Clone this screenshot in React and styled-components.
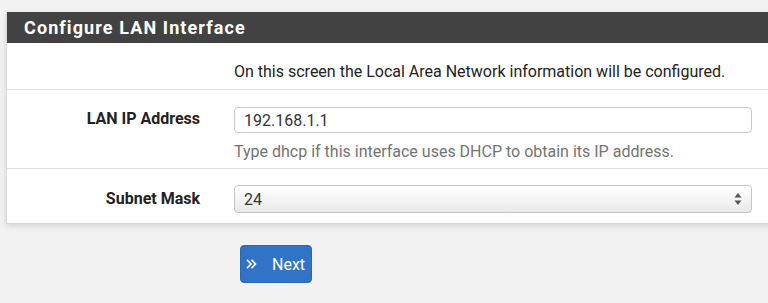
import React from 'react';
import styled, { createGlobalStyle } from 'styled-components';

const GlobalStyle = createGlobalStyle`
  html, body {
    margin: 0;
    padding: 0;
    background: #f2f2f2;
    font-family: Roboto, "Liberation Sans", Arial, sans-serif;
    overflow: hidden;
  }
`;

const Page = styled.div`
  padding: 12px 0 0 6px;
  width: 800px;
`;

const Panel = styled.div`
  background: #fff;
  border: 1px solid #d8d8d8;
  border-top: none;
  box-shadow: 0 2px 6px rgba(0, 0, 0, 0.12);
`;

const PanelHeader = styled.div`
  background: #424242;
  color: #fff;
  height: 31px;
  padding-left: 17px;
  display: flex;
  align-items: center;
  font-size: 18px;
  font-weight: 700;
  letter-spacing: 1.1px;
`;

const Row = styled.div`
  display: grid;
  grid-template-columns: 193px 1fr;
  column-gap: 34px;
  padding: ${(p) => p.$pad || '17px 0 16px'};
  border-top: ${(p) => (p.$first ? 'none' : '1px solid #e0e0e0')};
`;

const Label = styled.div`
  text-align: right;
  font-weight: 700;
  font-size: 16px;
  color: #222;
  line-height: 20px;
  padding-top: ${(p) => p.$top || '2px'};
`;

const Field = styled.div`
  width: 518px;
  font-size: 16px;
  color: #222;
`;

const Note = styled.div`
  font-size: 16px;
  color: #222;
  line-height: 20px;
`;

const Help = styled.div`
  font-size: 16px;
  color: #737373;
  line-height: 20px;
  margin-top: 9px;
`;

const TextInput = styled.input`
  box-sizing: border-box;
  width: 100%;
  height: 26px;
  border: 1px solid #c8c8c8;
  border-radius: 4px;
  padding: 0 9px;
  font-family: inherit;
  font-size: 16px;
  color: #333;
  outline: none;
`;

const SelectBox = styled.div`
  box-sizing: border-box;
  width: 100%;
  height: 28px;
  border: 1px solid #c4c4c4;
  border-radius: 4px;
  padding: 0 9px;
  display: flex;
  align-items: center;
  justify-content: space-between;
  font-size: 16px;
  color: #333;
  background: linear-gradient(#ffffff, #e9e9e9);
  box-shadow: inset 0 1px 0 #fff;
`;

const Footer = styled.div`
  padding: 21px 0 0 234px;
`;

const NextButton = styled.button`
  display: inline-flex;
  align-items: center;
  gap: 15px;
  height: 38px;
  padding: 0 6px 0 5px;
  background: #3174c7;
  border: 1px solid #2b67b3;
  border-radius: 4px;
  color: #fff;
  font-family: inherit;
  font-size: 16px;
  cursor: pointer;
`;

const Arrows = () => (
  <svg width="11" height="12" viewBox="0 0 11 12" fill="none" stroke="#fff" strokeWidth="1.6">
    <path d="M1 1.8 L5 6 L1 10.2" />
    <path d="M5.5 1.8 L9.5 6 L5.5 10.2" />
  </svg>
);

const SelectArrows = () => (
  <svg width="8" height="14" viewBox="0 0 8 14" fill="#555">
    <path d="M4 1 L7.5 5.5 L0.5 5.5 Z" />
    <path d="M4 13 L7.5 8.5 L0.5 8.5 Z" />
  </svg>
);

export default function App() {
  return (
    <>
      <GlobalStyle />
      <Page>
        <Panel>
          <PanelHeader>Configure LAN Interface</PanelHeader>
          <Row $first $pad="19px 0 7px">
            <div />
            <Note>On this screen the Local Area Network information will be configured.</Note>
          </Row>
          <Row $pad="17px 0 6px">
            <Label $top="2px">LAN IP Address</Label>
            <Field>
              <TextInput defaultValue="192.168.1.1" />
              <Help>Type dhcp if this interface uses DHCP to obtain its IP address.</Help>
            </Field>
          </Row>
          <Row $pad="16px 0 10px">
            <Label $top="4px">Subnet Mask</Label>
            <Field>
              <SelectBox>
                <span>24</span>
                <SelectArrows />
              </SelectBox>
            </Field>
          </Row>
        </Panel>
        <Footer>
          <NextButton>
            <Arrows />
            Next
          </NextButton>
        </Footer>
      </Page>
    </>
  );
}
